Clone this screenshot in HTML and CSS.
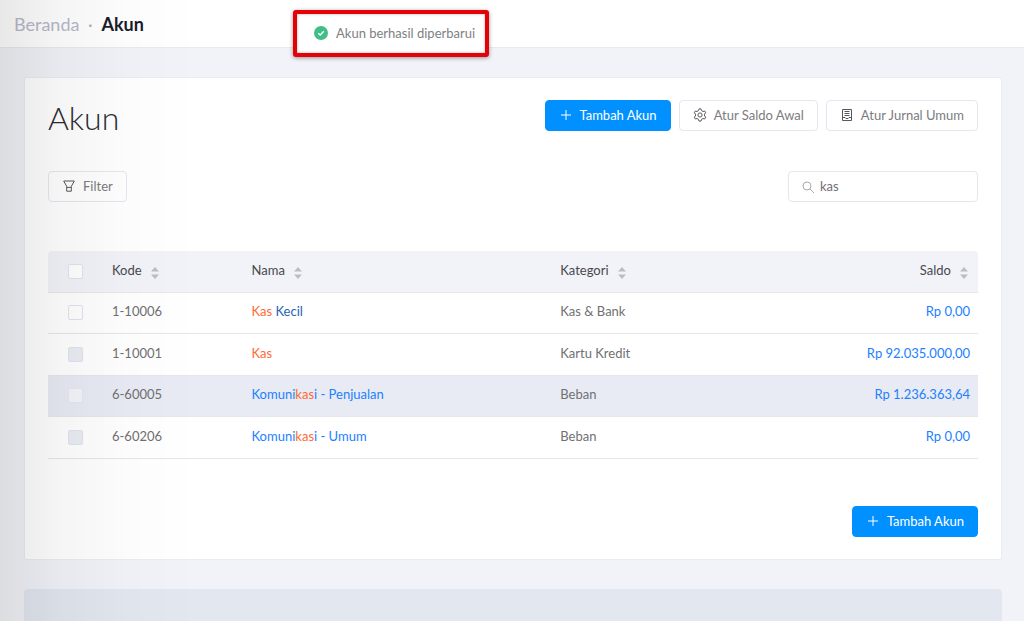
FILE: index.html
```html
<!DOCTYPE html>
<html lang="id">
<head>
<meta charset="utf-8">
<title>Akun</title>
<link rel="stylesheet" href="styles.css">
</head>
<body>
<header class="topbar">
  <nav class="crumbs" aria-label="Breadcrumb"><a class="crumb-link" href="#">Beranda</a><span class="crumb-dot">·</span><span class="crumb-current">Akun</span></nav>
</header>
<div class="toast" role="status">
  <svg class="toast-icon" viewBox="0 0 16 16" aria-hidden="true"><circle cx="8" cy="8" r="8" fill="#41bd87"/><path d="M4.8 8.2l2.3 2.2 4.1-4.4" fill="none" stroke="#fff" stroke-width="1.6"/></svg>
  <span>Akun berhasil diperbarui</span>
</div>
<main class="page">
  <section class="card">
    <div class="row">
      <h1 class="title">Akun</h1>
      <div class="actions">
        <button class="btn btn-primary" type="button"><svg class="icon" viewBox="0 0 14 14" aria-hidden="true"><path d="M7 2v10M2 7h10"/></svg>Tambah Akun</button>
        <button class="btn" type="button"><svg class="icon" viewBox="0 0 14 14" aria-hidden="true"><path d="M5.5 2.6L6 .9h2l.5 1.7 1.5.9 1.7-.5 1 1.8-1.2 1.3v1.8l1.2 1.3-1 1.8-1.7-.5-1.5.9L8 13.1H6l-.5-1.7-1.5-.9-1.7.5-1-1.8 1.2-1.3V6.1L1.3 4.8l1-1.8 1.7.5z"/><circle cx="7" cy="7" r="2.1"/></svg>Atur Saldo Awal</button>
        <button class="btn" type="button"><svg class="icon" viewBox="0 0 14 14" aria-hidden="true"><path d="M2.500 1.500h9v11h-9zM4.500 3.500h5M4.500 5.500h5M4.500 7.500h5M2.500 9.500h2.500c.5 1.500 3.500 1.500 4 0h2.500"/></svg>Atur Jurnal Umum</button>
      </div>
    </div>
    <div class="row tools">
      <button class="btn" type="button"><svg class="icon" viewBox="0 0 14 14" aria-hidden="true"><path d="M1.700 2h10.600L9.300 7.400v4.800H4.700V7.400zM4.700 8.400h4.600"/></svg>Filter</button>
      <label class="search">
        <svg class="icon" viewBox="0 0 14 14" aria-hidden="true"><circle cx="6" cy="6" r="4"/><path d="M9 9l4 4"/></svg>
        <input class="search-input" type="text" value="kas" aria-label="Cari akun">
      </label>
    </div>
    <table class="accounts">
      <colgroup><col class="col-check"><col class="col-code"><col class="col-name"><col class="col-category"><col></colgroup>
      <thead>
        <tr>
          <th class="cell-check"><input class="check" type="checkbox" aria-label="Pilih semua"></th>
          <th>Kode<svg class="sort" viewBox="0 0 8 12" aria-hidden="true"><path d="M0 4.500L4 0l4 4.500zM0 7.500h8L4 12z"/></svg></th>
          <th>Nama<svg class="sort" viewBox="0 0 8 12" aria-hidden="true"><path d="M0 4.500L4 0l4 4.500zM0 7.500h8L4 12z"/></svg></th>
          <th>Kategori<svg class="sort" viewBox="0 0 8 12" aria-hidden="true"><path d="M0 4.500L4 0l4 4.500zM0 7.500h8L4 12z"/></svg></th>
          <th class="amount">Saldo<svg class="sort" viewBox="0 0 8 12" aria-hidden="true"><path d="M0 4.500L4 0l4 4.500zM0 7.500h8L4 12z"/></svg></th>
        </tr>
      </thead>
      <tbody>
        <tr>
          <td class="cell-check"><input class="check" type="checkbox" aria-label="Pilih 1-10006"></td>
          <td>1-10006</td><td><a class="link link-visited" href="#"><mark class="hit">Kas</mark> Kecil</a></td><td>Kas &amp; Bank</td><td class="amount"><a class="link" href="#">Rp 0,00</a></td>
        </tr>
        <tr>
          <td class="cell-check"><input class="check" type="checkbox" disabled aria-label="Pilih 1-10001"></td>
          <td>1-10001</td><td><a class="link" href="#"><mark class="hit">Kas</mark></a></td><td>Kartu Kredit</td><td class="amount"><a class="link" href="#">Rp 92.035.000,00</a></td>
        </tr>
        <tr class="is-active">
          <td class="cell-check"><input class="check" type="checkbox" aria-label="Pilih 6-60005"></td>
          <td>6-60005</td><td><a class="link" href="#">Komuni<mark class="hit">kas</mark>i - Penjualan</a></td><td>Beban</td><td class="amount"><a class="link" href="#">Rp 1.236.363,64</a></td>
        </tr>
        <tr>
          <td class="cell-check"><input class="check" type="checkbox" disabled aria-label="Pilih 6-60206"></td>
          <td>6-60206</td><td><a class="link" href="#">Komuni<mark class="hit">kas</mark>i - Umum</a></td><td>Beban</td><td class="amount"><a class="link" href="#">Rp 0,00</a></td>
        </tr>
      </tbody>
    </table>
    <div class="card-footer">
      <button class="btn btn-primary" type="button"><svg class="icon" viewBox="0 0 14 14" aria-hidden="true"><path d="M7 2v10M2 7h10"/></svg>Tambah Akun</button>
    </div>
  </section>
  <section class="panel"></section>
</main>
</body>
</html>
```
FILE: styles.css
```css
* { box-sizing: border-box; }
body {
  margin: 0;
  min-height: 100vh;
  display: flex;
  flex-direction: column;
  overflow: hidden;
  background: #f2f3f8;
  color: #707073;
  font: 13px/20px Lato, "Open Sans", sans-serif;
}
body::after {
  content: "";
  position: fixed;
  inset: 0 auto 0 0;
  width: 200px;
  background: linear-gradient(to right, rgba(0,0,0,.09), rgba(0,0,0,.04) 30%, rgba(0,0,0,.012) 65%, rgba(0,0,0,0));
  pointer-events: none;
}
.topbar {
  padding: 10px 14px 9px;
  background: #fff;
  border-bottom: 1px solid #e9eaef;
}
.crumbs { display: flex; font-size: 18px; line-height: 28px; }
.crumb-link { color: #b9b9ca; text-decoration: none; }
.crumb-dot { width: 22px; text-align: center; color: #b0b0c0; }
.crumb-current { color: #1b1c2a; font-weight: 700; }
.toast {
  position: absolute;
  top: 10px;
  left: 293px;
  display: flex;
  align-items: center;
  gap: 8px;
  padding: 9px 10px 10px 17px;
  border: 4px solid #e60008;
  border-radius: 3px;
  background: #fff;
  box-shadow: 0 1px 4px rgba(0,0,0,.4), inset 0 0 3px rgba(0,0,0,.3);
  color: #808083;
}
.toast-icon { width: 14px; height: 14px; }
.page {
  flex: 1;
  display: flex;
  flex-direction: column;
  gap: 29px;
  padding: 29px 22px 0 24px;
}
.card {
  padding: 22px 23px;
  background: #fff;
  border: 1px solid #ebecf1;
  border-radius: 2px;
}
.row { display: flex; justify-content: space-between; align-items: flex-start; }
.title { margin: 0; font-size: 32px; line-height: 36px; font-weight: 300; color: #2c2c32; }
.actions { display: flex; gap: 8px; }
.btn {
  display: inline-flex;
  align-items: center;
  gap: 7px;
  height: 31px;
  padding: 0 13px 2px;
  border: 1px solid #e4e7f0;
  border-radius: 4px;
  background: transparent;
  color: #7c7c80;
  font: inherit;
}
.btn .icon { color: #58585c; }
.btn-primary { background: #0090ff; border-color: #0090ff; color: #fff; }
.btn-primary .icon { color: #fff; }
.icon { width: 14px; height: 14px; fill: none; stroke: currentColor; stroke-width: 1; }
.tools { margin-top: 35px; }
.search {
  display: flex;
  align-items: center;
  gap: 5px;
  width: 190px;
  height: 31px;
  padding: 0 12px;
  border: 1px solid #e4e7f0;
  border-radius: 4px;
  color: #aaa;
}
.search-input { flex: 1; min-width: 0; padding: 0 0 2px; border: 0; outline: 0; background: none; font: inherit; color: #707073; }
.accounts { width: 100%; margin-top: 49px; border-collapse: separate; border-spacing: 0; table-layout: fixed; }
.col-check { width: 56px; }
.col-code { width: 15%; }
.col-name { width: 33.2%; }
.col-category { width: 25%; }
.accounts th, .accounts td { height: 42px; padding: 0 8px 4px; text-align: left; border-bottom: 1px solid #e6e7ea; white-space: nowrap; }
.accounts tbody tr:nth-child(odd) td { height: 41px; }
.accounts th { background: #f2f3f8; color: #48484d; font-weight: 400; }
.accounts th:first-child { border-top-left-radius: 4px; }
.accounts th:last-child { border-top-right-radius: 4px; }
.accounts .cell-check { padding: 0 2px 4px 0; text-align: center; }
.accounts .amount { text-align: right; }
.is-active td { background: #e8ebf3; }
.check {
  appearance: none;
  width: 15px;
  height: 15px;
  margin: 0;
  vertical-align: middle;
  border: 1px solid #e0e4ee;
  border-radius: 2px;
  background: #fff;
}
.check:disabled { background: #ebedf4; }
.is-active .check { background: #f3f5f9; border-color: #e4e8f0; }
.sort { width: 8px; height: 12px; margin: 0 2px 0 9px; vertical-align: -4px; fill: #bcbdc2; }
.link { color: #2280ff; text-decoration: none; }
.link-visited { color: #2864b4; }
.hit { background: none; color: #ff6a35; }
.card-footer { display: flex; justify-content: flex-end; margin-top: 47px; }
.panel { flex: 1; min-height: 32px; border-radius: 4px 4px 0 0; background: #e2e7f0; }
```
